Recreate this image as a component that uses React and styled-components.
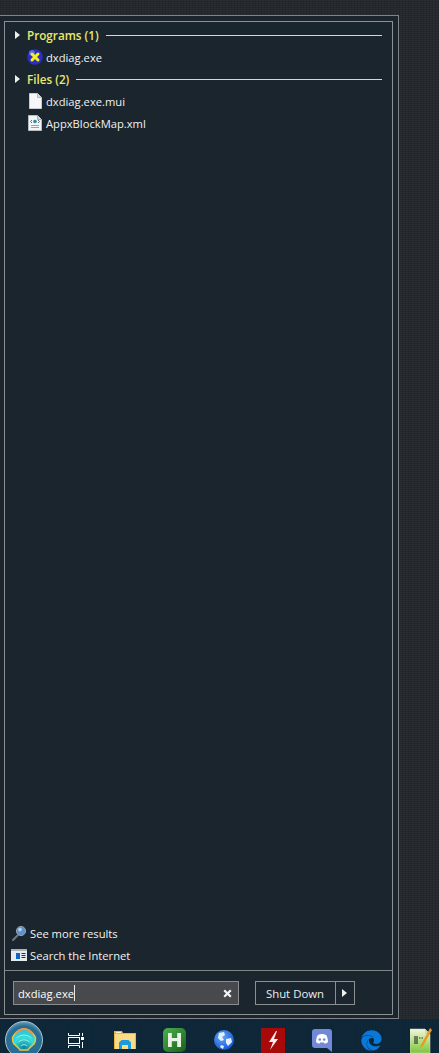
import React from 'react'
import styled, { createGlobalStyle } from 'styled-components'
import { FaEdge } from 'react-icons/fa'

const GlobalStyle = createGlobalStyle`
  html, body { margin: 0; padding: 0; background: #24272c; }
  body { font-family: "Open Sans", "Noto Sans", "Liberation Sans", sans-serif; overflow: hidden; }
`

const Screen = styled.div`
  width: 439px;
  height: 1053px;
  display: flex;
  flex-direction: column;
  overflow: hidden;
`

const Desktop = styled.div`
  height: 1019px;
  flex: none;
  padding-top: 15px;
  box-sizing: border-box;
  background-color: #25282d;
  background-image:
    repeating-linear-gradient(90deg, rgba(0, 0, 0, 0.1) 0 1px, transparent 1px 3px),
    repeating-linear-gradient(0deg, rgba(255, 255, 255, 0.02) 0 1px, transparent 1px 2px);
`

const OuterFrame = styled.div`
  width: 399px;
  height: 1004px;
  box-sizing: border-box;
  border: 1px solid #7d8386;
  border-left: none;
  padding: 5px 5px 3px 4px;
  background: #1c252d;
`

const InnerFrame = styled.div`
  height: 100%;
  box-sizing: border-box;
  border: 1px solid #8b9093;
  display: flex;
  flex-direction: column;
  background: #1b252d;
`

const Results = styled.div`
  flex: 1;
  padding-top: 3px;
`

const GroupHeader = styled.div`
  height: 22px;
  box-sizing: border-box;
  display: flex;
  align-items: center;
  padding: 0 10px 2px 10px;
  color: #e9e96e;
  font-size: 11.7px;
  font-weight: 600;
`

const Caret = styled.svg`
  width: 5px;
  height: 8px;
  margin-right: 7px;
  flex: none;
`

const HeaderRule = styled.div`
  flex: 1;
  height: 1px;
  background: #d4d8da;
  margin-left: 7px;
`

const ResultRow = styled.div`
  height: 22px;
  box-sizing: border-box;
  display: flex;
  align-items: center;
  padding-left: ${p => p.$indent}px;
  padding-bottom: ${p => p.$lift || 0}px;
  gap: ${p => p.$gap}px;
  color: #f0f2f3;
  font-size: 11.2px;
  white-space: nowrap;
`

const Links = styled.div`
  padding-bottom: 4px;
`

const Divider = styled.div`
  height: 1px;
  background: #7f8487;
`

const SearchBar = styled.div`
  display: flex;
  align-items: center;
  padding: 10px 0 9px 8px;
`

const SearchBox = styled.div`
  width: 226px;
  height: 24px;
  box-sizing: border-box;
  border: 1px solid #8a8d8f;
  background: #47494c;
  display: flex;
  align-items: center;
  padding: 0 6px 0 4px;
  color: #fff;
  font-size: 11.2px;
  font-weight: 500;
`

const SearchText = styled.span`
  flex: 1;
  display: flex;
  align-items: center;
`

const TextCaret = styled.span`
  width: 1px;
  height: 16px;
  background: #e8e8e8;
`

const ShutDownGroup = styled.div`
  display: flex;
  height: 24px;
  margin-left: 16px;
  border: 1px solid #8a8f92;
  box-sizing: border-box;
  color: #eceeef;
  font-size: 11.4px;
`

const ShutDownLabel = styled.div`
  width: 78px;
  margin-right: 1px;
  display: flex;
  align-items: center;
  justify-content: center;
`

const ShutDownArrow = styled.div`
  width: 19px;
  border-left: 1px solid #8a8f92;
  display: flex;
  align-items: center;
  padding-left: 6px;
  box-sizing: border-box;
`

const Taskbar = styled.div`
  height: 34px;
  flex: none;
  display: flex;
  align-items: center;
  background-color: #0f2839;
  background-image: repeating-linear-gradient(90deg, rgba(0, 0, 0, 0.08) 0 1px, transparent 1px 3px);
`

const OrbSlot = styled.div`
  width: 51px;
  height: 34px;
  flex: none;
  padding: 2px 0 0 5px;
  box-sizing: border-box;
`

const TaskSlot = styled.div`
  width: 49.3px;
  height: 34px;
  flex: none;
  display: flex;
  justify-content: center;
  align-items: center;
  padding-top: 8px;
  box-sizing: border-box;
`

const CaretIcon = () => (
  <Caret viewBox="0 0 5 8"><path d="M0 0l5 4-5 4z" fill="#eef0f0" /></Caret>
)

const DxIcon = () => (
  <svg width="16" height="16" viewBox="0 0 16 16">
    <circle cx="8" cy="8" r="7.800" fill="#2a2ec4" />
    <circle cx="5" cy="4" r="3" fill="#6a78ec" opacity="0.8" />
    <path d="M5 5l6 6M11 5l-6 6" stroke="#f6ef1e" strokeWidth="3" strokeLinecap="round" />
  </svg>
)

const FileIcon = () => (
  <svg width="13" height="16" viewBox="0 0 13 16">
    <path d="M.5.5h8l4 4v11H.5z" fill="#f5f6f8" stroke="#c8ccd0" />
    <path d="M8.500.5v4h4" fill="#d5d8dc" stroke="#b4b8bc" />
  </svg>
)

const XmlIcon = () => (
  <svg width="14" height="16" viewBox="0 0 14 16">
    <path d="M.5.5h9l4 4v11H.5z" fill="#f2f4f6" stroke="#b8bcc0" />
    <path d="M9.500.5v4h4" fill="#d5d8dc" stroke="#a8acb0" />
    <circle cx="7" cy="6.500" r="1.800" fill="#2d8f9a" />
    <path d="M4 5L2.500 6.500 4 8M10 5l1.500 1.500L10 8" stroke="#5f6a72" fill="none" />
    <path d="M3 10.500h8M3 12.500h8" stroke="#9aa2aa" />
  </svg>
)

const MagnifierIcon = () => (
  <svg width="15" height="16" viewBox="0 0 15 16">
    <path d="M1 15l5-5" stroke="#6f7880" strokeWidth="2" strokeLinecap="round" />
    <circle cx="9" cy="6" r="4.600" fill="#5d92c8" stroke="#8fa0ac" />
    <circle cx="8" cy="4.600" r="1.800" fill="#b6d4ee" />
  </svg>
)

const InternetIcon = () => (
  <svg width="16" height="12" viewBox="0 0 16 12">
    <rect width="16" height="12" fill="#e8ebee" />
    <rect width="16" height="2" fill="#a9b0b6" />
    <rect x="5" y="4" width="4" height="6" fill="#0d66c8" />
    <path d="M10.500 4.500h4M10.500 6.500h4M10.500 8.500h4" stroke="#2a3036" />
  </svg>
)

const ClearIcon = () => (
  <svg width="9" height="9" viewBox="0 0 9 9">
    <path d="M1.200 1.200l6.600 6.600M7.800 1.200L1.200 7.800" stroke="#f4f4f4" strokeWidth="2.200" />
  </svg>
)

const StartOrb = () => (
  <svg width="38" height="38" viewBox="0 0 38 38">
    <defs>
      <radialGradient id="orb" cx="50%" cy="60%" r="60%">
        <stop offset="0%" stopColor="#2a6f92" />
        <stop offset="80%" stopColor="#2a6d92" />
        <stop offset="100%" stopColor="#6ba4ba" />
      </radialGradient>
      <radialGradient id="shell" cx="50%" cy="90%" r="85%">
        <stop offset="0%" stopColor="#127e96" />
        <stop offset="55%" stopColor="#38dcd8" />
        <stop offset="100%" stopColor="#2fc4d8" />
      </radialGradient>
    </defs>
    <circle cx="19" cy="19" r="18.500" fill="url(#orb)" stroke="#a5c6d2" />
    <path d="M15 29c-1-2-4-4-6-6-2-3-2-7 0-9 3-4 7-6 10-6s7 2 10 6c2 2 2 6 0 9-2 2-5 4-6 6z" fill="url(#shell)" stroke="#e8c84a" strokeWidth="1.400" />
    <path d="M10 13c3-3 6-5 9-5s6 2 9 5" fill="none" stroke="#e8964a" strokeWidth="1.800" />
    <path d="M16 25a4 4 0 0 1 6 0M13.500 21a8 8 0 0 1 11 0M11.500 17a11 11 0 0 1 15 0" fill="none" stroke="#8ff0ea" strokeWidth="1" />
  </svg>
)

const TaskViewIcon = () => (
  <svg width="16" height="15" viewBox="0 0 16 15">
    <path d="M.5 0v2.500h11V0M.5 15v-2.500h11V15" fill="none" stroke="#fff" />
    <rect x=".5" y="4.500" width="11" height="6" fill="none" stroke="#fff" />
    <rect x="13" y="4" width="3" height="3" fill="#fff" />
    <path d="M14.500 0v3M14.500 9v6" stroke="#fff" />
  </svg>
)

const ExplorerIcon = () => (
  <svg width="22" height="18" viewBox="0 0 22 18">
    <path d="M0 0h8l1 2h13v16H0z" fill="#e8b84e" />
    <rect x="1" y="3" width="20" height="15" fill="#fbdc85" />
    <path d="M2 1h5v1H2z" fill="#fff2c0" />
    <path d="M5 18v-6.500L7.500 9h7l2.500 2.500V18h-3v-4H8v4z" fill="#1a9be0" />
  </svg>
)

const HIcon = () => (
  <svg width="23" height="24" viewBox="0 0 23 24">
    <defs>
      <linearGradient id="hbg" x1="0" y1="0" x2="1" y2="1">
        <stop offset="0%" stopColor="#4cb04c" />
        <stop offset="100%" stopColor="#1a6018" />
      </linearGradient>
    </defs>
    <rect width="23" height="24" rx="5" fill="url(#hbg)" />
    <rect x="5" y="5" width="3.800" height="14" fill="#e8f2e4" />
    <rect x="14.200" y="5" width="3.800" height="14" fill="#e8f2e4" />
    <rect x="5" y="10" width="13" height="3.200" fill="#e8f2e4" />
  </svg>
)

const GlobeIcon = () => (
  <svg width="20" height="20" viewBox="0 0 20 20">
    <defs>
      <radialGradient id="gbg" cx="40%" cy="35%" r="75%">
        <stop offset="0%" stopColor="#66a8f6" />
        <stop offset="100%" stopColor="#0b4fd4" />
      </radialGradient>
    </defs>
    <circle cx="10" cy="10" r="10" fill="url(#gbg)" />
    <path d="M5 3l5-1 1 3-3 2 2 3-3 1-3-3zM12 9l5-1 1 4-4 4-2-3zM7 15l3 1-1 3-3-2z" fill="#e6f0fc" />
  </svg>
)

const FlashIcon = () => (
  <svg width="24" height="25" viewBox="0 0 24 25">
    <rect width="24" height="25" fill="#a80a0a" />
    <path d="M15 3l-7 11h4l-3 8 8-11h-4l3-8z" fill="#f6ecec" />
  </svg>
)

const DiscordIcon = () => (
  <svg width="20" height="23" viewBox="0 0 20 23">
    <path d="M3 0h14a3 3 0 0 1 3 3v20l-5-4H3a3 3 0 0 1-3-3V3a3 3 0 0 1 3-3z" fill="#7289da" />
    <path d="M4 13c0-3 1-6 2-7 1.500-.7 3-1 4-1s2.500.3 4 1c1 1 2 4 2 7-1 1-2.500 1.500-3.500 1.500l-1-1.200c-1 .3-2 .3-3 0l-1 1.200C6.500 14.500 5 14 4 13z" fill="#fff" />
    <circle cx="7.800" cy="10.500" r="1.300" fill="#7289da" />
    <circle cx="12.200" cy="10.500" r="1.300" fill="#7289da" />
  </svg>
)

const NotepadIcon = () => (
  <svg width="22" height="25" viewBox="0 0 22 25">
    <defs>
      <linearGradient id="npbg" x1="0" y1="0" x2="0" y2="1">
        <stop offset="0%" stopColor="#f2f6d8" />
        <stop offset="100%" stopColor="#7cc63a" />
      </linearGradient>
    </defs>
    <path d="M0 1h15l5 5v19H0z" fill="url(#npbg)" stroke="#d8dcc8" strokeWidth=".5" />
    <path d="M15 1v5h5" fill="#cfd4c0" />
    <path d="M5 8v8M7 8v8" stroke="#30382c" strokeWidth="1.200" />
    <path d="M9 10h4" stroke="#30382c" strokeDasharray="1.500 1" />
    <path d="M20 0L11 17l-1 3 3-2 9-16z" fill="#e89a1e" />
  </svg>
)

const taskIcons = [
  <TaskViewIcon />,
  <ExplorerIcon />,
  <HIcon />,
  <GlobeIcon />,
  <FlashIcon />,
  <DiscordIcon />,
  <FaEdge size={21} color="#0a78d8" />,
  <NotepadIcon />,
]

export default function App() {
  return (
    <Screen>
      <GlobalStyle />
      <Desktop>
        <OuterFrame>
          <InnerFrame>
            <Results>
              <GroupHeader>
                <CaretIcon />
                Programs (1)
                <HeaderRule />
              </GroupHeader>
              <ResultRow $indent={22} $gap={3} $lift={2}><DxIcon /> dxdiag.exe</ResultRow>
              <GroupHeader>
                <CaretIcon />
                Files (2)
                <HeaderRule />
              </GroupHeader>
              <ResultRow $indent={24} $gap={4} $lift={2}><FileIcon /> dxdiag.exe.mui</ResultRow>
              <ResultRow $indent={23} $gap={4} $lift={2}><XmlIcon /> AppxBlockMap.xml</ResultRow>
            </Results>
            <Links>
              <ResultRow $indent={7} $gap={3}><MagnifierIcon /> See more results</ResultRow>
              <ResultRow $indent={6} $gap={3}><InternetIcon /> Search the Internet</ResultRow>
            </Links>
            <Divider />
            <SearchBar>
              <SearchBox>
                <SearchText>dxdiag.exe<TextCaret /></SearchText>
                <ClearIcon />
              </SearchBox>
              <ShutDownGroup>
                <ShutDownLabel>Shut Down</ShutDownLabel>
                <ShutDownArrow><CaretIcon /></ShutDownArrow>
              </ShutDownGroup>
            </SearchBar>
          </InnerFrame>
        </OuterFrame>
      </Desktop>
      <Taskbar>
        <OrbSlot><StartOrb /></OrbSlot>
        {taskIcons.map((icon, i) => <TaskSlot key={i}>{icon}</TaskSlot>)}
      </Taskbar>
    </Screen>
  )
}
